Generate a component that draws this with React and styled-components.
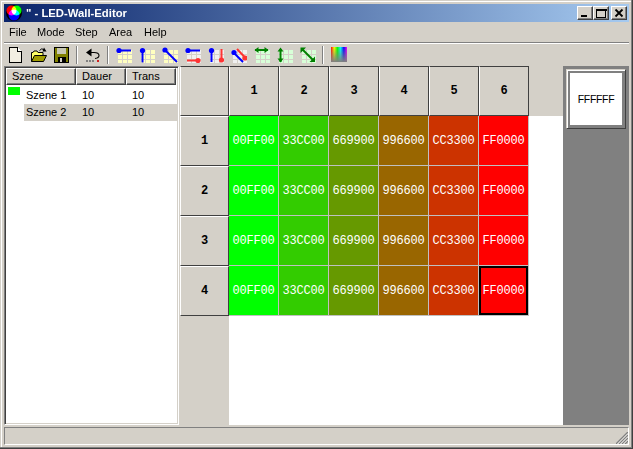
import React from "react";
import styled, { createGlobalStyle } from "styled-components";

const Global = createGlobalStyle`
  html, body { margin: 0; padding: 0; background: #d4d0c8; }
  body { font-family: "Liberation Sans", Arial, sans-serif; font-size: 11px; color: #000; }
`;

const Win = styled.div`
  box-sizing: border-box;
  width: 633px;
  height: 449px;
  padding: 4px;
  background: #d4d0c8;
  display: flex;
  flex-direction: column;
  overflow: hidden;
  box-shadow: inset -1px -1px #404040, inset -2px -2px #808080, inset 1px 1px #d4d0c8, inset 2px 2px #fff;
`;
const TitleBar = styled.div`
  height: 18px;
  flex: none;
  display: flex;
  align-items: center;
  background: linear-gradient(90deg, #0a246a, #a6caf0);
  color: #fff;
  font-weight: bold;
  font-size: 11.3px;
  padding: 0 2px 0 1px;
`;
const TitleLabel = styled.span`
  margin-left: 3px;
  flex: 1;
  white-space: pre;
`;
const WinButton = styled.button`
  box-sizing: border-box;
  width: 16px;
  height: 14px;
  padding: 0;
  margin: 0 0 0 ${p => p.$gap || 0}px;
  display: block;
  background: #d4d0c8;
  border: 1px solid;
  border-color: #fff #404040 #404040 #fff;
  box-shadow: inset -1px -1px #808080;
  svg { display: block; }
`;
const MenuBar = styled.div`
  height: 20px;
  flex: none;
  display: flex;
  align-items: center;
  padding-left: 1px;
  font-size: 11px;
`;
const MenuItem = styled.span`
  width: ${p => p.$w}px;
  padding-left: 4px;
  box-sizing: border-box;
`;
const Rule = styled.div`
  height: 2px;
  flex: none;
  background: linear-gradient(#808080 50%, #fff 50%);
`;
const ToolBar = styled.div`
  height: 22px;
  flex: none;
  display: flex;
  align-items: flex-start;
`;
const ToolButton = styled.div`
  width: 23px;
  height: 22px;
  padding: 3px 0 0 4px;
  box-sizing: border-box;
  svg { display: block; }
`;
const ToolSep = styled.div`
  width: 2px;
  height: 18px;
  margin: 2px 3px 0 3px;
  background: linear-gradient(90deg, #808080 50%, #fff 50%);
`;
const Client = styled.div`
  height: 359px;
  flex: none;
  display: flex;
`;
const List = styled.div`
  box-sizing: border-box;
  width: 175px;
  flex: none;
  border: 1px solid;
  border-color: #808080 #fff #fff #808080;
  box-shadow: inset 1px 1px #404040, inset -1px -1px #d4d0c8;
  background: #fff;
  padding: 1px;
`;
const ListHead = styled.div`
  display: flex;
  height: 17px;
`;
const HeadCell = styled.div`
  box-sizing: border-box;
  width: ${p => p.$w}px;
  height: 17px;
  line-height: 15px;
  padding-left: 5px;
  background: #d4d0c8;
  border: 1px solid;
  border-color: #fff #404040 #404040 #fff;
  box-shadow: inset -1px -1px #808080;
  font-size: 11px;
`;
const ListBody = styled.div`
  padding-top: 2px;
`;
const Row = styled.div`
  display: flex;
  height: 17px;
  line-height: 17px;
  font-size: 11px;
`;
const SwatchCell = styled.div`
  width: 18px;
  flex: none;
`;
const Swatch = styled.div`
  width: 12px;
  height: 8px;
  margin-left: 2px;
  background: ${p => p.$color};
`;
const RowCells = styled.div`
  display: flex;
  flex: 1;
  background: ${p => (p.$selected ? "#d4d0c8" : "#fff")};
`;
const RowCell = styled.div`
  width: ${p => p.$w}px;
  padding-left: ${p => p.$pad}px;
  box-sizing: border-box;
`;
const RowHeads = styled.div`
  width: 50px;
  flex: none;
  padding-left: 1px;
  box-sizing: border-box;
  background: #d4d0c8;
`;
const Main = styled.div`
  width: 334px;
  flex: none;
  display: flex;
  flex-direction: column;
  background: #fff;
`;
const ColHeads = styled.div`
  display: flex;
  background: #d4d0c8;
`;
const Head = styled.div`
  box-sizing: border-box;
  width: ${p => p.$w || 50}px;
  height: 50px;
  flex: none;
  display: flex;
  align-items: center;
  justify-content: center;
  background: #d4d0c8;
  border: 1px solid;
  border-color: ${p => (p.$top ? "#404040" : "#fff")} #404040 #404040 #fff;
  font: bold 12px "Liberation Mono", "Courier New", monospace;
`;
const CellRow = styled.div`
  display: flex;
`;
const Cell = styled.div`
  box-sizing: border-box;
  width: 50px;
  height: 50px;
  flex: none;
  display: flex;
  align-items: center;
  justify-content: center;
  background: #${p => p.$color};
  color: #fff;
  border-right: 1px solid #c0c0c0;
  border-bottom: 1px solid #c0c0c0;
  font: 12px "Liberation Mono", "Courier New", monospace;
  letter-spacing: -0.2px;
  box-shadow: ${p => (p.$active ? "inset 0 0 0 2px #000" : "none")};
`;
const Side = styled.div`
  width: 66px;
  flex: none;
  background: #808080;
  padding: 3px 0 0 3px;
  box-sizing: border-box;
`;
const BigSwatch = styled.div`
  box-sizing: border-box;
  width: 60px;
  height: 60px;
  border: 1px solid;
  border-color: #d4d0c8 #404040 #404040 #d4d0c8;
  box-shadow: inset 1px 1px #fff;
  padding: 3px;
  background: #808080;
`;
const SwatchFace = styled.div`
  width: 52px;
  height: 52px;
  background: #fff;
  display: flex;
  align-items: center;
  justify-content: center;
  font-size: 10.5px;
  letter-spacing: -0.3px;
`;
const Status = styled.div`
  box-sizing: border-box;
  height: 18px;
  margin-top: 2px;
  flex: none;
  border: 1px solid;
  border-color: #808080 #fff #fff #808080;
  display: flex;
  justify-content: flex-end;
  align-items: flex-end;
`;

const gridCells = (c) => (
  <g shapeRendering="crispEdges" fill={c}>
    {[2, 7, 12].map(x => [3, 8, 12.99].map(y => <rect key={x + "-" + y} x={x} y={y} width="4" height={y > 12 ? 3 : 4} />))}
  </g>
);
const Svg = ({ children }) => <svg width="16" height="16" viewBox="0 0 16 16">{children}</svg>;
const B = "#0000ff", R = "#ff3333", G = "#008000";

const GridIcon = ({ c, children }) => <Svg>{gridCells(c)}{children}</Svg>;
const Stroke = ({ d, color }) => <path d={d} fill="none" stroke={color} strokeWidth="2" />;
const Dot = ({ x, y, color }) => <circle cx={x} cy={y} r="2.6" fill={color} />;

const icons = [
  <Svg key="new">
    <path shapeRendering="crispEdges" d="M1.5 .5H9.5L13.5 4.5V15.5H1.5Z" fill="#f2eee2" stroke="#000" />
    <path shapeRendering="crispEdges" d="M9.5 .5V4.5H13.5" fill="#fff" stroke="#000" />
  </Svg>,
  <Svg key="open">
    <path d="M0.5 14.5V5.5H2L3 4H6L7 5.5H12V8" fill="#ffff66" stroke="#000" />
    <path d="M.5 14.5L3.5 8.5H15.5L12.5 14.5Z" fill="#a09c00" stroke="#000" />
    <path d="M8.5 3.5Q10.5 .8 13 2.5" fill="none" stroke="#000" />
    <path d="M13 .5L15.5 4.5L11.5 4.5Z" fill="#000" />
  </Svg>,
  <Svg key="save">
    <g shapeRendering="crispEdges">
      <rect x=".5" y=".5" width="14" height="15" fill="#808000" stroke="#000" />
      <rect x="3" y="1" width="9" height="6" fill="#c8c8b4" />
      <rect x="4" y="10" width="8" height="6" fill="#000" />
      <rect x="6" y="11" width="2" height="4" fill="#d4d0c8" />
    </g>
  </Svg>,
  "sep",
  <Svg key="undo">
    <path d="M3 5.5H9Q14 5.5 14 8.5Q14 11 10 11.5" fill="none" stroke="#000" strokeWidth="1.1" />
    <path d="M6.5 1.5V9.5L1 5.5Z" fill="#000" />
    <path shapeRendering="crispEdges" d="M1 13.5H9M1 14.5H9" stroke="#808080" strokeDasharray="2 1" />
    <rect shapeRendering="crispEdges" x="12" y="13" width="2" height="2" fill="#d02020" />
  </Svg>,
  "sep",
  <GridIcon key="g1" c="#ffffc0"><Stroke d="M3 3.5H15" color={B} /><Dot x={3} y={3.5} color={B} /></GridIcon>,
  <GridIcon key="g2" c="#ffffc0"><Stroke d="M3.5 3V15.5" color={B} /><Dot x={3.5} y={3.5} color={B} /></GridIcon>,
  <GridIcon key="g3" c="#ffffc0"><Stroke d="M3 3L15 15" color={B} /><Dot x={3} y={3} color={B} /></GridIcon>,
  <GridIcon key="g4" c="#f0f0f0"><Stroke d="M3 3.5H15" color={B} /><Dot x={3} y={3.5} color={B} /><Stroke d="M2 13.5H13" color={R} /><Dot x={13} y={13.5} color={R} /></GridIcon>,
  <GridIcon key="g5" c="#f0f0f0"><Stroke d="M3.5 3V15" color={B} /><Dot x={3.5} y={3.5} color={B} /><Stroke d="M13.5 2V13" color={R} /><Dot x={13.5} y={13} color={R} /></GridIcon>,
  <GridIcon key="g6" c="#f0f0f0"><Stroke d="M6 2L14.5 11" color={R} /><Dot x={14} y={11} color={R} /><Stroke d="M2 5L12 15" color={B} /><Dot x={3} y={5.5} color={B} /></GridIcon>,
  <GridIcon key="a1" c="#d8ffd8"><path d="M1 3H14" stroke={G} strokeWidth="2" /><path d="M4.5 0L.5 3L4.5 6Z M10.5 0L14.5 3L10.5 6Z" fill={G} /></GridIcon>,
  <GridIcon key="a2" c="#d8ffd8"><path d="M3.5 2V15" stroke={G} strokeWidth="2" /><path d="M.5 4.5L3.5 .5L6.5 4.5Z M.5 11.5L3.5 15.5L6.5 11.5Z" fill={G} /></GridIcon>,
  <GridIcon key="a3" c="#d8ffd8"><path d="M2 2L13.5 13.5" stroke={G} strokeWidth="2" /><path d="M.5 .5H6L.5 6Z M15 15H9.5L15 9.5Z" fill={G} /></GridIcon>,
  "sep",
  <Svg key="rainbow">
    <defs>
      <linearGradient id="hue">
        <stop offset="0" stopColor="#ff0000" /><stop offset=".2" stopColor="#ffff00" />
        <stop offset=".4" stopColor="#00ff00" /><stop offset=".6" stopColor="#00ffff" />
        <stop offset=".8" stopColor="#0000ff" /><stop offset="1" stopColor="#ff00ff" />
      </linearGradient>
      <linearGradient id="fade" x1="0" x2="0" y1="0" y2="1">
        <stop offset="0" stopColor="#808080" stopOpacity="0" /><stop offset="1" stopColor="#808080" stopOpacity="1" />
      </linearGradient>
    </defs>
    <rect width="16" height="15" fill="url(#hue)" />
    <rect width="16" height="15" fill="url(#fade)" />
  </Svg>,
];

const Logo = () => (
  <svg width="18" height="18" viewBox="0 0 18 18" style={{ flex: "none" }}>
    <circle cx="9" cy="9" r="8" fill="#000" />
    <g style={{ isolation: "isolate" }}>
      <circle cx="6.5" cy="6.5" r="5" fill="#ff0000" style={{ mixBlendMode: "screen" }} />
      <circle cx="11.5" cy="6.5" r="5" fill="#00ff00" style={{ mixBlendMode: "screen" }} />
      <circle cx="9" cy="11" r="5.5" fill="#0000ff" style={{ mixBlendMode: "screen" }} />
    </g>
  </svg>
);

const colors = ["00FF00", "33CC00", "669900", "996600", "CC3300", "FF0000"];
const menus = [["File", 28], ["Mode", 38], ["Step", 34], ["Area", 35], ["Help", 40]];
const scenes = [
  { name: "Szene 1", color: "#00ff00" },
  { name: "Szene 2", color: "#fff", selected: true },
];

export default function App() {
  return (
    <Win>
      <Global />
      <TitleBar>
        <Logo />
        <TitleLabel>" - LED-Wall-Editor</TitleLabel>
        <WinButton aria-label="min">
          <svg width="14" height="12" shapeRendering="crispEdges"><rect x="3" y="8" width="6" height="2" fill="#000" /></svg>
        </WinButton>
        <WinButton aria-label="max">
          <svg width="14" height="12"><path shapeRendering="crispEdges" d="M2.5 2.5H11.5V10.5H2.5Z M2 2H12V3.5H2Z" fill="none" stroke="#000" /></svg>
        </WinButton>
        <WinButton $gap={2} aria-label="close">
          <svg width="14" height="12"><path d="M3.5 2.5L10.5 9.5M10.5 2.5L3.5 9.5" stroke="#000" strokeWidth="1.8" /></svg>
        </WinButton>
      </TitleBar>
      <MenuBar>
        {menus.map(([m, w]) => <MenuItem key={m} $w={w}>{m}</MenuItem>)}
      </MenuBar>
      <Rule />
      <ToolBar>
        {icons.map((ic, i) => ic === "sep" ? <ToolSep key={i} /> : <ToolButton key={i}>{ic}</ToolButton>)}
      </ToolBar>
      <Client>
        <List>
          <ListHead>
            <HeadCell $w={70}>Szene</HeadCell>
            <HeadCell $w={50}>Dauer</HeadCell>
            <HeadCell $w={50}>Trans</HeadCell>
          </ListHead>
          <ListBody>
            {scenes.map(s => (
              <Row key={s.name}>
                <SwatchCell><Swatch $color={s.color} /></SwatchCell>
                <RowCells $selected={s.selected}>
                  <RowCell $w={52} $pad={2}>{s.name}</RowCell>
                  <RowCell $w={50} $pad={6}>10</RowCell>
                  <RowCell $w={50} $pad={6}>10</RowCell>
                </RowCells>
              </Row>
            ))}
          </ListBody>
        </List>
        <RowHeads>
          <Head $w={49} $top />
          {[1, 2, 3, 4].map(r => <Head key={r} $w={49}>{r}</Head>)}
        </RowHeads>
        <Main>
          <ColHeads>
            {[1, 2, 3, 4, 5, 6].map(c => <Head key={c} $top>{c}</Head>)}
          </ColHeads>
          {[0, 1, 2, 3].map(r => (
            <CellRow key={r}>
              {colors.map((c, i) => <Cell key={c} $color={c} $active={r === 3 && i === 5}>{c}</Cell>)}
            </CellRow>
          ))}
        </Main>
        <Side>
          <BigSwatch><SwatchFace>FFFFFF</SwatchFace></BigSwatch>
        </Side>
      </Client>
      <Status>
        <svg width="12" height="12" viewBox="0 0 12 12">
          <path d="M12 0L0 12M12 3L3 12M12 6L6 12M12 9L9 12" stroke="#808080" strokeWidth="1.4" />
          <path d="M12 1.5L1.5 12M12 4.5L4.5 12M12 7.5L7.5 12" stroke="#fff" strokeWidth=".7" />
        </svg>
      </Status>
    </Win>
  );
}
